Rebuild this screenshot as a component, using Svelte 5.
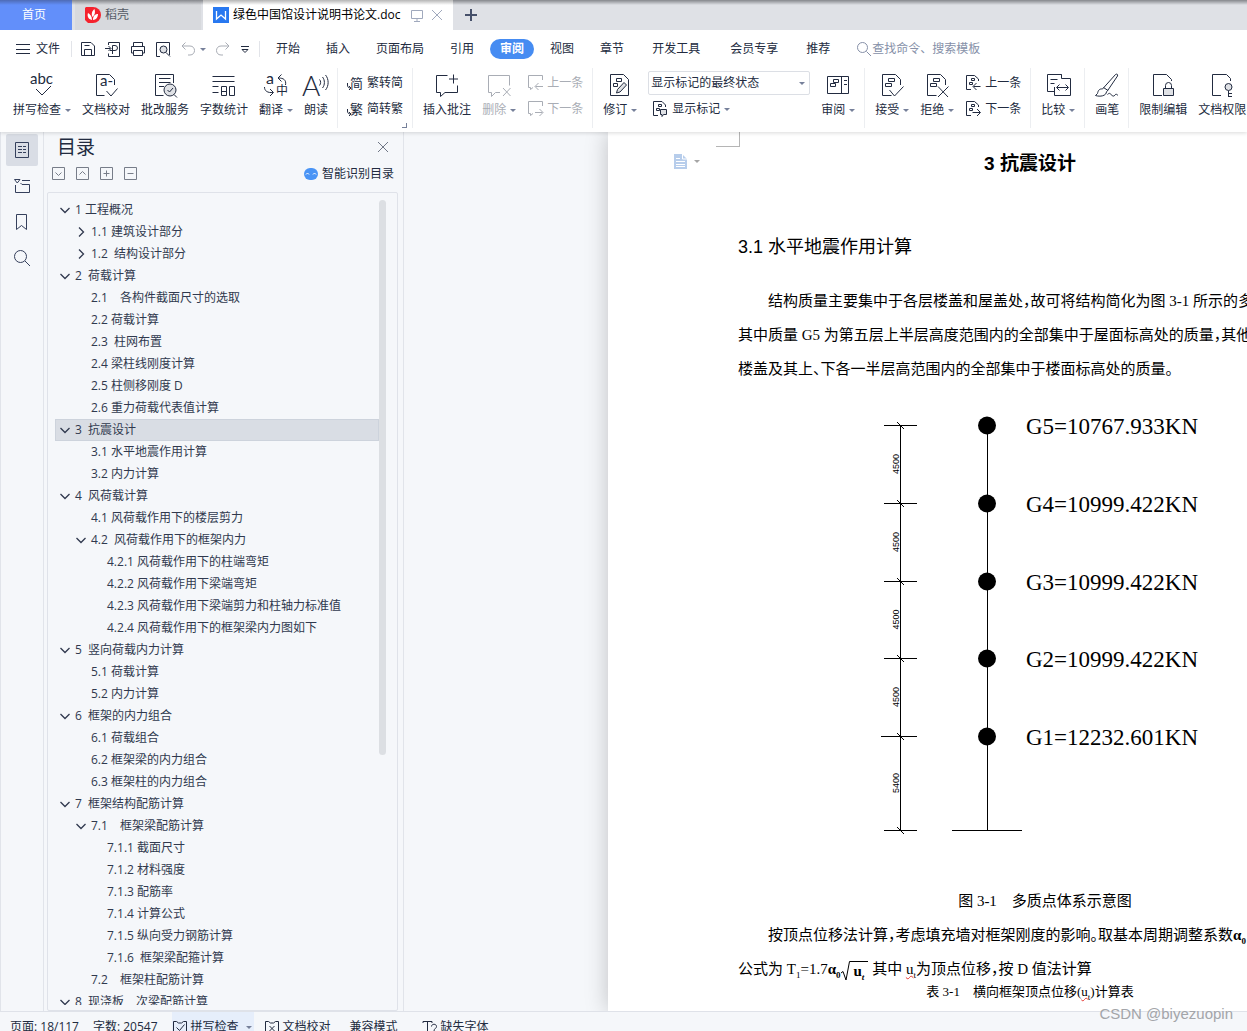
<script>
	const docShape = 'M13.5 24.5H4.5V3.5H17.5L22.5 8.5V14';
	const marks = 'M10.5 7.5h6v3h-6zM7.5 12.5h6v3h-6z';

	// large icons sit on a 28px grid, small ones on a 16px grid
	const icons = {
		spell: { d: 'M8 18L14 24L23 15', t: [['abc', 2, 13, 15]] },
		proof: { d: 'M12.5 24.5H4.5V3.5H17.5L22.5 8.5V14M14.5 20L19 25L25.5 17.5', t: [['a-', 8, 15, 15]] },
		batch: {
			d: 'M12.5 24.5H4.5V3.5H22.5V12M8 7.5H19.5M8 11.5H19.5M8 15.5H13',
			f: 'M25 19a6 6 0 1 1-12 0a6 6 0 1 1 12 0',
			o: 'M16.5 19l2 2l3.5-4M23 23.5L26 26.5'
		},
		count: {
			d: 'M2.5 5.5h22M2.5 10.5h22M2.5 15.5h6M2.5 21.5h6M11.5 15.5h5v9h-5zM11.5 20.5h5M19.5 15.5h5v9h-5z'
		},
		translate: {
			d: 'M23.5 14c1-5-2-7-7-7M19.5 3.5L16 7L19.5 10.5M2.5 16c0 4 3 6 8.5 5.5M8 18L11.5 21.5L8 25',
			t: [['a', 4, 13, 16], ['中', 14, 24, 12]]
		},
		read: { d: 'M17.5 8.5c1.5 1.5 1.5 4 0 6M20.5 6c2.5 3 2.5 8 0 11M23.5 4c3.5 4 3.5 11 0 15', t: [['A', 0, 25, 28]] },
		insert: { d: 'M14.5 4.5H3.5V21.5H7.5V25.5L12 21.5H24.5V14.5M20.5 3.5v9M16 8h9' },
		remove: { d: 'M24.5 14.5V4.5H3.5V21.5H6.5V25.5L10.5 21.5H15M18 17L25.5 25M25.5 17L18 25' },
		revise: {
			d: 'M4.5 3.5H17.5L22.5 8.5V24.5H4.5ZM10.5 7.5h5v3h-5zM7.5 12.5h4v3h-4z',
			f: 'M10.5 22L11.5 18.5L18 11.5L20.5 14L14 21Z'
		},
		pane: { d: 'M3.5 5.5h21v17h-21zM17.5 5.5v17M20 9.5h3M20 13.5h3M9.5 8.5h5v3h-5zM6.5 12.5h5v3h-5z' },
		accept: { d: docShape + marks + 'M11.5 19L16.5 25L25.5 15.5' },
		reject: { d: docShape + marks + 'M15 15.5L25 26M25.5 15.5L15 26' },
		compare: {
			d: 'M17.5 7V3.5H3.5V20.5H10M6.5 8.5h7M6.5 12.5h4M17.5 7.5H26.5V24.5H10.5V16M17.5 3.5V7.5M13 16.5H24M15.5 13.5L12.5 16.5L15.5 19.5M21.5 13.5L24.5 16.5L21.5 19.5'
		},
		brush: {
			d: 'M9.5 18L22.5 3.5C24 2.5 25 3.5 24.5 5L14 20.5M10.5 16.5L15 19.5M9.5 18C6 17.5 5 20 4.5 22.5L2.5 24.5C7 26 13.5 25 13.5 20.5M14.5 23.5c2-2 3-1 4 .5s2.5 1.5 3.5 0s2-.5 3 .5'
		},
		lock: { d: 'M13 24.5H4.5V3.5H17.5L22.5 8.5V10M16.5 17V14.5a3 3 0 0 1 6 0V17', f: 'M14.5 17.5h10v7h-10z' },
		key: { d: 'M13 24.5H4.5V3.5H18.5L22.5 7.5V10M20.5 19.5V26M20.5 22.5h3.5M20.5 25.5h3.5', f: 'M24 16a3.5 3.5 0 1 1-7 0a3.5 3.5 0 1 1 7 0' },
		simplify: { d: 'M.5 8v2c0 2 1 3 3 3M2 11L4 13L2 15', t: [['简', 3, 13, 13]] },
		complicate: { d: 'M.5 8v2c0 2 1 3 3 3M2 11L4 13L2 15', t: [['繁', 3, 13, 13]] },
		prevNote: { d: 'M15.5 5V.5H1.5V12.5H3.5V14.5L6 12.5M16 11.5H8.5M11.5 8L8 11.5L11.5 15' },
		nextNote: { d: 'M15.5 5V.5H1.5V12.5H3.5V14.5L6 12.5M8 11.5H15.5M12.5 8L16 11.5L12.5 15' },
		showMarks: { d: 'M6 14.5H1.5V.5H10L13.5 4V6M6.5 3.5h3v2h-3zM4.5 7.5h3v2h-3z', f: 'M8.5 8.5h6v5h-3l-1.5 2v-2h-1.5z' },
		prevDoc: { d: 'M6 14.5H1.5V.5H9.5L13.5 4V6M6.5 3.5h3v2h-3zM4.5 7.5h3v2h-3zM15.5 11.5H8.5M11.5 8L8 11.5L11.5 15' },
		nextDoc: { d: 'M6 14.5H1.5V.5H9.5L13.5 4V6M6.5 3.5h3v2h-3zM4.5 7.5h3v2h-3zM7.5 11.5H15M12 8L15.5 11.5L12 15' },
		save: { d: 'M1.5 1.5H11L14.5 5V14.5H1.5ZM4.5 14V8.5H11.5V14M4.5 4.5h5' },
		pdf: { d: 'M3.5 4V1.5H14.5V15.5H3.5V12.5M0 7.5H5.5M3.5 5L6 7.5L3.5 10M7.5 13V4.5h2.5a2 2 0 0 1 0 5H5' },
		print: { d: 'M3.5 5V1.5H12.5V5M3.5 12H1.5V5.5H14.5V12H12.5M3.5 9.5H12.5V14.5H3.5Z' },
		preview: { d: 'M5 15.5H1.5V1.5H14.5V14', f: 'M12 8.5a3.5 3.5 0 1 1-7 0a3.5 3.5 0 1 1 7 0', o: 'M11 11.5L15 15.5' },
		undo: { d: 'M5.5 1.5L2 5L5.5 8.5M2 5H10c6 0 6 9 0 9H8' },
		redo: { d: 'M10.5 1.5L14 5L10.5 8.5M14 5H6c-6 0-6 9 0 9H8' },
		search: { d: 'M11.5 6.5a5 5 0 1 1-10 0a5 5 0 1 1 10 0M10.5 10.5L15 15' },
		outline: { d: 'M1.5.5h13v15h-13zM4 4.5h4M9 4.5h3M4 7.5h4M9 7.5h3M4 10.5h4M9 10.5h3' },
		chapter: { d: 'M.5 1.5H6L3.25 5ZM8 2.5H16M1.5 7V14.5H15.5V6.5H8L6.5 5' },
		bookmark: { d: 'M2.5.5h10v15L7.5 11.5L2.5 15.5Z' },
		find: { d: 'M12.5 6.5a6 6 0 1 1-12 0a6 6 0 1 1 12 0M11 11L16 16' },
		checkBox: { d: 'M1.5 2.5h3l2 1.5h3l2-1.5h3v13h-13zM4.5 8.5l3 3l5-6' },
		crossBox: { d: 'M1.5 2.5h3l2 1.5h3l2-1.5h3v13h-13zM5.5 7l5 5M10.5 7l-5 5' },
		missing: { d: 'M1 4V2.5H10V4M5.5 2.5V15.5H8M9.5 7.5c0-3 5-3 5 0c0 2-2.5 2-2.5 4.5M12 14v1.5' },
		close: { d: 'M3 3L13 13M13 3L3 13' },
		screen: { d: 'M2.5 3.5h11v8h-11zM8 11.5v3M5 14.5h6' },
		plus: { d: 'M8 2V14M2 8H14', w: 2 },
		boxDown: { d: 'M1.5 1.5h12v12h-12zM4.5 6.5l3 3l3-3' },
		boxUp: { d: 'M1.5 1.5h12v12h-12zM4.5 8.5l3-3l3 3' },
		boxPlus: { d: 'M1.5 1.5h12v12h-12zM7.5 4.5v6M4.5 7.5h6' },
		boxMinus: { d: 'M1.5 1.5h12v12h-12zM4.5 7.5h6' },
		open: { d: 'M3.5 6L8 10.5L12.5 6', w: 1.3 },
		closed: { d: 'M6 3.5L10.5 8L6 12.5', w: 1.3 }
	};

	const quick = [['save', '保存'], ['pdf', '输出为PDF'], ['print', '打印'], ['preview', '打印预览']];
	const menus = ['开始', '插入', '页面布局', '引用', '审阅', '视图', '章节', '开发工具', '会员专享', '推荐'];

	const groups = [
		[
			{ icon: 'spell', label: '拼写检查', caret: true },
			{ icon: 'proof', label: '文档校对' },
			{ icon: 'batch', label: '批改服务' },
			{ icon: 'count', label: '字数统计' },
			{ icon: 'translate', label: '翻译', caret: true },
			{ icon: 'read', label: '朗读' }
		],
		[{ pair: [['simplify', '繁转简'], ['complicate', '简转繁']], corner: true }],
		[
			{ icon: 'insert', label: '插入批注' },
			{ icon: 'remove', label: '删除', caret: true, off: true },
			{ pair: [['prevNote', '上一条'], ['nextNote', '下一条']], off: true }
		],
		[
			{ icon: 'revise', label: '修订', caret: true },
			{ select: true },
			{ icon: 'pane', label: '审阅', caret: true }
		],
		[
			{ icon: 'accept', label: '接受', caret: true },
			{ icon: 'reject', label: '拒绝', caret: true },
			{ pair: [['prevDoc', '上一条'], ['nextDoc', '下一条']] }
		],
		[{ icon: 'compare', label: '比较', caret: true }],
		[{ icon: 'brush', label: '画笔' }],
		[
			{ icon: 'lock', label: '限制编辑' },
			{ icon: 'key', label: '文档权限' }
		]
	];

	const rail = [['outline', '目录'], ['chapter', '章节'], ['bookmark', '书签'], ['find', '查找']];

	// level, text, state of the arrow
	const toc = [
		[0, '1 工程概况', 'open'],
		[1, '1.1 建筑设计部分', 'closed'],
		[1, '1.2  结构设计部分', 'closed'],
		[0, '2  荷载计算', 'open'],
		[1, '2.1　各构件截面尺寸的选取'],
		[1, '2.2 荷载计算'],
		[1, '2.3  柱网布置'],
		[1, '2.4 梁柱线刚度计算'],
		[1, '2.5 柱侧移刚度 D'],
		[1, '2.6 重力荷载代表值计算'],
		[0, '3  抗震设计', 'open'],
		[1, '3.1 水平地震作用计算'],
		[1, '3.2 内力计算'],
		[0, '4  风荷载计算', 'open'],
		[1, '4.1 风荷载作用下的楼层剪力'],
		[1, '4.2  风荷载作用下的框架内力', 'open'],
		[2, '4.2.1 风荷载作用下的柱端弯矩'],
		[2, '4.2.2 风荷载作用下梁端弯矩'],
		[2, '4.2.3 风荷载作用下梁端剪力和柱轴力标准值'],
		[2, '4.2.4 风荷载作用下的框架梁内力图如下'],
		[0, '5  竖向荷载内力计算', 'open'],
		[1, '5.1 荷载计算'],
		[1, '5.2 内力计算'],
		[0, '6  框架的内力组合', 'open'],
		[1, '6.1 荷载组合'],
		[1, '6.2 框架梁的内力组合'],
		[1, '6.3 框架柱的内力组合'],
		[0, '7  框架结构配筋计算', 'open'],
		[1, '7.1　框架梁配筋计算', 'open'],
		[2, '7.1.1 截面尺寸'],
		[2, '7.1.2 材料强度'],
		[2, '7.1.3 配筋率'],
		[2, '7.1.4 计算公式'],
		[2, '7.1.5 纵向受力钢筋计算'],
		[2, '7.1.6  框架梁配箍计算'],
		[1, '7.2　框架柱配筋计算'],
		[0, '8  现浇板　次梁配筋计算', 'open']
	];

	const masses = [
		['G5=10767.933KN', 17, '4500'],
		['G4=10999.422KN', 95, '4500'],
		['G3=10999.422KN', 173, '4500'],
		['G2=10999.422KN', 250, '4500'],
		['G1=12232.601KN', 328, '5400']
	];
	const ground = 422;

	let menu = $state('审阅');
	let current = $state(10);
</script>

{#snippet icon(name, size = 16)}
	{@const i = icons[name]}
	<svg class="icon" width={size} height={size} viewBox="0 0 {size} {size}" aria-hidden="true">
		<path d={i.d} stroke-width={i.w ?? 1} />
		{#if i.f}<path class="shade" d={i.f} />{/if}
		{#if i.o}<path d={i.o} />{/if}
		{#each i.t ?? [] as [text, x, y, fs]}
			<text {x} {y} font-size={fs} class:light={fs > 20}>{text}</text>
		{/each}
	</svg>
{/snippet}

<div class="app">
	<header>
		<nav class="tabs">
			<button class="tab home">首页</button>
			<button class="tab docer">
				<svg width="16" height="16" viewBox="0 0 16 16" aria-hidden="true">
					<path d="M1 0h7a8 8 0 0 1 0 16H3l-3-3V1z" fill="#f5222d" />
					<path d="M7 13C3 12 2 9 3 6c2 1 4 3 4 7zM7.5 10C6 7 7 4 9.5 2c1 3 .5 6-2 8zM8 13c0-4 2-6 5-6c0 3-2 6-5 6z" fill="#fff" />
				</svg>
				稻壳
			</button>
			<button class="tab file">
				<svg width="16" height="16" viewBox="0 0 16 16" aria-hidden="true">
					<rect width="16" height="16" fill="#2878f0" />
					<path d="M3.5 4v8L8 8l4.5 4V4" fill="none" stroke="#fff" stroke-width="1.3" />
				</svg>
				<span class="name">绿色中国馆设计说明书论文.doc</span>
				{@render icon('screen')}
				{@render icon('close')}
			</button>
			<button class="tab add" aria-label="新建标签">{@render icon('plus')}</button>
		</nav>

		<div class="menubar">
			<button class="file-menu">
				<svg class="icon" width="14" height="12" viewBox="0 0 14 12" aria-hidden="true">
					<path d="M0 1.5h14M0 6.5h14M0 10.5h14" />
				</svg>
				文件
			</button>
			<div class="quick">
				{#each quick as [name, label]}
					<button aria-label={label}>{@render icon(name)}</button>
				{/each}
				<button class="off" aria-label="撤销">{@render icon('undo')}<i class="caret"></i></button>
				<button class="off" aria-label="恢复">{@render icon('redo')}</button>
				<button aria-label="自定义快速访问工具栏">
					<svg class="icon" width="10" height="10" viewBox="0 0 10 10" aria-hidden="true">
						<path d="M1 2.5h8M2 5.5h6L5 8.5z" />
					</svg>
				</button>
			</div>
			<nav class="menus">
				{#each menus as m, i}
					<button class:active={m === menu} class:wide={i === 7 || i === 8} onclick={() => (menu = m)}>{m}</button>
				{/each}
			</nav>
			<label class="search">
				{@render icon('search')}
				<input type="text" placeholder="查找命令、搜索模板" aria-label="查找命令、搜索模板" />
			</label>
		</div>

		<div class="ribbon">
			{#each groups as group}
				<div class="group" class:tight={group[0].corner}>
					{#each group as item}
						{#if item.pair}
							<div class="pair" class:off={item.off}>
								{#each item.pair as [name, label]}
									<button class="small">{@render icon(name)}{label}</button>
								{/each}
							</div>
							{#if item.corner}<i class="corner"></i>{/if}
						{:else if item.select}
							<div class="pair marks">
								<div class="select">
									<select aria-label="显示标记的状态"><option>显示标记的最终状态</option></select>
									<i class="caret"></i>
								</div>
								<button class="small">{@render icon('showMarks')}显示标记<i class="caret"></i></button>
							</div>
						{:else}
							<button class="big" class:off={item.off}>
								{@render icon(item.icon, 28)}
								<span class="label">{item.label}{#if item.caret}<i class="caret"></i>{/if}</span>
							</button>
						{/if}
					{/each}
				</div>
			{/each}
		</div>
	</header>

	<main>
		<nav class="rail">
			{#each rail as [name, label], i}
				<button class:active={i === 0} aria-label={label}>{@render icon(name)}</button>
			{/each}
		</nav>

		<aside>
			<div class="head">
				<h2>目录</h2>
				<button aria-label="关闭">{@render icon('close')}</button>
			</div>
			<div class="tools">
				<button aria-label="全部展开">{@render icon('boxDown')}</button>
				<button aria-label="全部收起">{@render icon('boxUp')}</button>
				<button aria-label="展开">{@render icon('boxPlus')}</button>
				<button aria-label="收起">{@render icon('boxMinus')}</button>
				<button class="smart">
					<svg width="14" height="12" viewBox="0 0 14 12" aria-hidden="true">
						<rect width="14" height="12" rx="6" fill="#4a94f5" />
						<path d="M2 6.5l1.5-1.5L5 6.5M9 6.5l1.5-1.5L12 6.5" fill="none" stroke="#fff" />
					</svg>
					智能识别目录
				</button>
			</div>
			<div class="tree">
				<ul>
					{#each toc as [level, text, arrow], i}
						<li>
							<button class="l{level}" class:current={i === current} onclick={() => (current = i)}>
								<span class="arrow">{#if arrow}{@render icon(arrow)}{/if}</span>
								<span class="entry">{text}</span>
							</button>
						</li>
					{/each}
				</ul>
				<div class="bar"><div class="thumb"></div></div>
			</div>
		</aside>

		<section class="workspace">
			<article>
				<i class="crop"></i>
				<button class="outline-mark" aria-label="大纲级别">
					<svg width="13" height="15" viewBox="0 0 13 15" aria-hidden="true">
						<path d="M0 0h8l5 5v10H0z" fill="#b7cdeb" />
						<path d="M8.5 0v5H13M2 4.5h4M2 7.5h9M2 10.5h9M2 12.5h9" fill="none" stroke="#fff" />
					</svg>
					<i class="caret"></i>
				</button>
				<h1>3 抗震设计</h1>
				<h3>3.1 水平地震作用计算</h3>
				<p class="indent">结构质量主要集中于各层楼盖和屋盖处，故可将结构简化为图 3-1 所示的多</p>
				<p>其中质量 G5 为第五层上半层高度范围内的全部集中于屋面标高处的质量，其他</p>
				<p>楼盖及其上、下各一半层高范围内的全部集中于楼面标高处的质量。</p>

				<svg class="diagram" width="330" height="440" viewBox="0 0 330 440" role="img" aria-label="多质点体系示意图">
					<path d="M18.5 17V{ground}M105.5 17V{ground}M70 {ground}.5h70M2 {ground}.5h33M15 {ground - 3}l7 7" />
					{#each masses as [text, y, span], i}
						{@const mid = (y + (masses[i + 1]?.[1] ?? ground)) / 2}
						<path d="M{i === 4 ? -1 : 2} {y}.5h{i === 4 ? 36 : 33}M15 {y - 3}l7 7" />
						<circle cx="105" cy={y + 0.5} r="9" />
						<text class="mass" x="144" y={y + 9}>{text}</text>
						<text class="dim" text-anchor="middle" transform="translate(17 {mid}) rotate(-90)">{span}</text>
					{/each}
				</svg>

				<p class="indent center">图 3-1　多质点体系示意图</p>
				<p class="indent">按顶点位移法计算，考虑填充墙对框架刚度的影响。取基本周期调整系数<b>α<sub>0</sub></b></p>
				<p>
					公式为 T<sub>1</sub>=1.7<b>α<sub>0</sub></b><svg class="root" width="9" height="20" viewBox="0 0 9 20" aria-hidden="true"><path d="M0 12l2-1.5l3 8.5L8.5.5H9" /></svg><b class="radicand">u<sub><em>t</em></sub></b>
					其中 <span class="typo">u<sub>t</sub></span>为顶点位移，按 D 值法计算
				</p>
				<p class="center table-title">表 3-1　横向框架顶点位移(<span class="typo">u<sub>t</sub></span>)计算表</p>
			</article>
		</section>
	</main>

	<footer>
		<span class="cell">页面: 18/117</span>
		<span class="cell">字数: 20547</span>
		<button class="checked">{@render icon('checkBox')}拼写检查<i class="caret"></i></button>
		<button>{@render icon('crossBox')}文档校对</button>
		<span class="cell">兼容模式</span>
		<button>{@render icon('missing')}缺失字体</button>
	</footer>
	<div class="watermark">CSDN @biyezuopin</div>
</div>

<style>
	:global(body) {
		margin: 0;
	}

	.app {
		position: relative;
		display: flex;
		flex-direction: column;
		height: 100vh;
		overflow: hidden;
		background: #f5f7fa;
		color: #222b40;
		font: 12px/16px 'Open Sans', 'Noto Sans CJK SC', sans-serif;
		white-space: nowrap;
	}

	button {
		display: flex;
		align-items: center;
		flex: none;
		margin: 0;
		padding: 0;
		border: 0;
		background: none;
		color: inherit;
		font: inherit;
		white-space: nowrap;
	}

	svg {
		flex: none;
	}

	.icon {
		overflow: visible;
		fill: none;
		stroke: currentColor;
	}

	.icon text {
		fill: currentColor;
		stroke: none;
		font-family: Lato, 'Noto Sans CJK SC', sans-serif;
	}

	.icon .light {
		font-weight: 300;
	}

	.shade {
		fill: #dfe1e5;
	}

	.caret {
		flex: none;
		width: 0;
		height: 0;
		margin-left: 4px;
		border: 3px solid transparent;
		border-top-color: #76809a;
		border-bottom-width: 0;
	}

	.off {
		color: #a9adb5;
	}

	header {
		position: relative;
		z-index: 1;
		flex: none;
		background: #fff;
		box-shadow: 0 1px 4px rgba(0, 0, 0, 0.15);
	}

	.tabs {
		display: flex;
		height: 30px;
		background: linear-gradient(#85878c, #dfe1e6 5px);
	}

	.home {
		justify-content: center;
		width: 72px;
		padding-right: 4px;
		background: linear-gradient(#4e6bb5, #628ffa 5px);
		color: #fff;
	}

	.docer {
		gap: 4px;
		width: 126px;
		margin-left: 3px;
		padding-left: 10px;
		background: linear-gradient(#85878c, #d7d9dd 5px);
		color: #555b66;
	}

	.file {
		gap: 4px;
		width: 250px;
		margin-left: 2px;
		padding: 0 8px 0 10px;
		background: linear-gradient(#b5b5b5, #fff 5px);
		color: #a0a9bd;
	}

	.name {
		flex: 1;
		color: #000;
		text-align: left;
	}

	.add {
		padding-left: 10px;
		color: #46506a;
	}

	.menubar {
		display: flex;
		align-items: center;
		height: 38px;
	}

	.file-menu {
		gap: 6px;
		padding: 0 11px 0 16px;
		border-right: 1px solid #e2e4e9;
	}

	.quick {
		display: flex;
		align-items: center;
		gap: 9px;
		padding: 0 9px 0 8px;
		border-right: 1px solid #e2e4e9;
	}

	.menus {
		display: flex;
		gap: 6px;
		padding-left: 6px;
	}

	.menus button {
		height: 20px;
		padding: 0 10px;
		border-radius: 10px;
	}

	.menus .wide {
		padding: 0 12px;
	}

	.menus .active {
		background: #468cf2;
		color: #fff;
		font-weight: bold;
	}

	.search {
		display: flex;
		align-items: center;
		padding-left: 16px;
		color: #8690a8;
	}

	.search input {
		width: 120px;
		padding: 0;
		border: 0;
		background: none;
		font: inherit;
	}

	.search input::placeholder {
		color: #8690a8;
	}

	.ribbon {
		display: flex;
		height: 64px;
	}

	.group {
		position: relative;
		display: flex;
		flex: none;
		align-items: flex-start;
		gap: 11px;
		margin-bottom: 4px;
		padding: 3px 9px 0 10px;
		border-right: 1px solid #eceef1;
	}

	.group:first-child {
		padding-left: 13px;
	}

	.tight {
		padding-left: 9px;
	}

	.big {
		flex-direction: column;
		gap: 3px;
	}

	.big .icon {
		margin: 0 -2px;
	}

	.label {
		display: flex;
		align-items: center;
	}

	.pair {
		display: flex;
		flex-direction: column;
		align-items: flex-start;
		gap: 10px;
		padding-top: 4px;
	}

	.small {
		gap: 4px;
	}

	.small .caret {
		margin-left: 0;
	}

	.marks {
		gap: 6px;
		padding-top: 0;
	}

	.marks .small {
		padding-left: 4px;
	}

	.select {
		display: flex;
		align-items: center;
		box-sizing: border-box;
		width: 162px;
		height: 24px;
		padding: 0 4px 0 2px;
		border: 1px solid #dcdfe5;
		border-radius: 2px;
	}

	.select select {
		flex: 1;
		appearance: none;
		padding: 0;
		border: 0;
		background: none;
		color: inherit;
		font: inherit;
	}

	.corner {
		position: absolute;
		right: 5px;
		bottom: 0;
		width: 4px;
		height: 4px;
		border: solid #76809a;
		border-width: 0 1px 1px 0;
	}

	main {
		display: flex;
		flex: 1;
		min-height: 0;
	}

	.rail {
		display: flex;
		flex: none;
		flex-direction: column;
		gap: 4px;
		padding: 2px 5px;
		border: solid #e1e4ea;
		border-width: 0 1px;
		color: #35405c;
	}

	.rail button {
		justify-content: center;
		width: 32px;
		height: 32px;
		border-radius: 2px;
	}

	.rail .active {
		background: #d9dde5;
	}

	aside {
		display: flex;
		flex: none;
		flex-direction: column;
		box-sizing: border-box;
		width: 360px;
		border-right: 1px solid #e1e4ea;
	}

	.head {
		display: flex;
		align-items: center;
		justify-content: space-between;
		height: 30px;
		padding: 0 12px 0 13px;
		color: #707786;
	}

	h2 {
		margin: 0;
		color: #222b40;
		font-size: 19px;
		font-weight: normal;
		line-height: 24px;
	}

	.tools {
		display: flex;
		align-items: center;
		gap: 8px;
		height: 24px;
		padding: 0 9px 6px 7px;
		color: #777d89;
	}

	.smart {
		gap: 4px;
		margin-left: auto;
		color: #222b40;
	}

	.tree {
		display: flex;
		flex: 1;
		min-height: 0;
		margin: 0 5px 0 3px;
		padding: 6px 11px 5px 7px;
		border: 1px solid #dfe2e9;
		border-radius: 2px;
	}

	ul {
		flex: 1;
		margin: 0;
		padding: 0;
		overflow: hidden;
		list-style: none;
	}

	li button {
		box-sizing: border-box;
		width: 100%;
		height: 22px;
		border: 1px solid transparent;
		color: #30394e;
	}

	.entry {
		white-space: pre;
	}

	.l0 {
		padding-left: 1px;
	}

	.l1 {
		padding-left: 17px;
	}

	.l2 {
		padding-left: 33px;
	}

	.current {
		border-color: #cdd3dc;
		background: #d9dde4;
	}

	.arrow {
		display: flex;
		width: 18px;
	}

	.bar {
		width: 7px;
		padding-top: 1px;
	}

	.thumb {
		height: 69%;
		border-radius: 4px;
		background: #dcdfe3;
	}

	.workspace {
		flex: 1;
		min-width: 0;
		padding-left: 204px;
		overflow: hidden;
	}

	article {
		position: relative;
		box-sizing: border-box;
		width: 844px;
		height: 100%;
		padding: 0 130px;
		background: #fff;
		box-shadow: 0 0 22px rgba(0, 0, 0, 0.22);
		color: #000;
		font: 15px/34px 'Liberation Serif', 'Noto Sans CJK SC', serif;
		font-feature-settings: 'halt';
	}

	.crop {
		position: absolute;
		top: 0;
		left: 108px;
		width: 23px;
		height: 14px;
		border: solid #b5b5b5;
		border-width: 0 1px 1px 0;
	}

	.outline-mark {
		position: absolute;
		top: 22px;
		left: 66px;
		gap: 3px;
	}

	.outline-mark .caret {
		border-top-color: #a5a5a5;
	}

	h1,
	h3 {
		margin: 0;
		font-family: 'Liberation Sans', 'Noto Sans CJK SC', sans-serif;
	}

	h1 {
		padding-top: 15px;
		font-size: 19px;
		line-height: 34px;
		text-align: center;
	}

	h3 {
		padding: 49px 0 20px;
		font-size: 18px;
		font-weight: normal;
		line-height: 34px;
	}

	p {
		height: 34px;
		margin: 0;
	}

	.indent {
		text-indent: 30px;
	}

	.center {
		text-align: center;
	}

	sub {
		font-size: 9px;
		line-height: 0;
	}

	.diagram {
		display: block;
		margin: 22px 0 36px 144px;
		overflow: visible;
	}

	.diagram path {
		fill: none;
		stroke: #000;
	}

	.mass {
		font-size: 23px;
	}

	.dim {
		font: 9px 'Liberation Sans', sans-serif;
	}

	.root {
		vertical-align: middle;
		fill: none;
		stroke: #000;
	}

	.radicand {
		display: inline-block;
		height: 19px;
		padding: 0 4px;
		border-top: 1px solid #000;
		line-height: 19px;
		vertical-align: middle;
	}

	.typo {
		text-decoration: underline wavy #e53935 1px;
	}

	.table-title {
		font-size: 13px;
		line-height: 12px;
	}

	footer {
		display: flex;
		flex: none;
		align-items: flex-start;
		height: 19px;
		padding-left: 10px;
		border-top: 1px solid #dfe2e9;
		overflow: hidden;
		line-height: 30px;
	}

	footer button {
		gap: 3px;
		height: 30px;
		margin-right: 10px;
	}

	.cell {
		margin-right: 14px;
	}

	.checked {
		padding-right: 2px;
		background: #e6eefb;
	}

	footer button + .cell {
		margin: 0 24px 0 9px;
	}

	.watermark {
		position: absolute;
		right: 14px;
		bottom: 7px;
		z-index: 2;
		color: #a3a5a9;
		font: 15px/20px 'Liberation Sans', sans-serif;
	}
</style>
